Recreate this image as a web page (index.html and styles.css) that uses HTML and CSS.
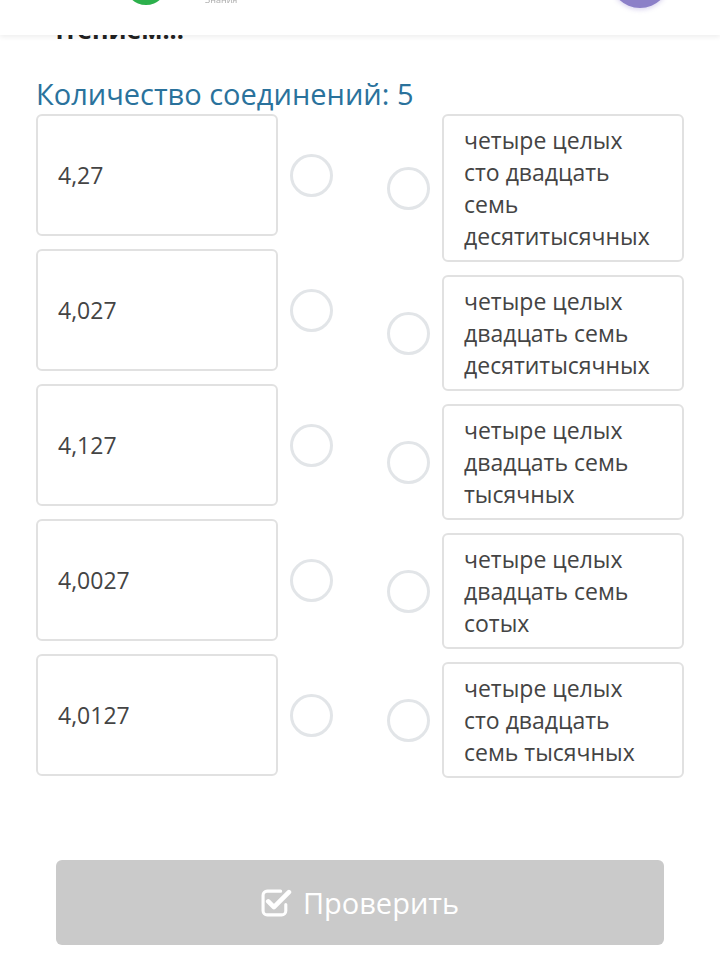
FILE: index.html
```html
<!DOCTYPE html>
<html lang="ru">
<head>
<meta charset="utf-8">
<link rel="stylesheet" href="styles.css">
</head>
<body>
<header class="topbar">
  <span class="logo-dot"></span>
  <span class="logo-text">Знания</span>
  <span class="avatar"></span>
</header>
<main class="page">
  <h1 class="title">чтением...</h1>
  <h2 class="count">Количество соединений: 5</h2>
  <div class="match">
    <div class="col col-left">
      <div class="row"><div class="box box-left">4,27</div><span class="radio"></span></div>
      <div class="row"><div class="box box-left">4,027</div><span class="radio"></span></div>
      <div class="row"><div class="box box-left">4,127</div><span class="radio"></span></div>
      <div class="row"><div class="box box-left">4,0027</div><span class="radio"></span></div>
      <div class="row"><div class="box box-left">4,0127</div><span class="radio"></span></div>
    </div>
    <div class="col col-right">
      <div class="row"><span class="radio"></span><div class="box box-right">четыре целых сто двадцать семь десятитысячных</div></div>
      <div class="row"><span class="radio"></span><div class="box box-right">четыре целых двадцать семь десятитысячных</div></div>
      <div class="row"><span class="radio"></span><div class="box box-right">четыре целых двадцать семь тысячных</div></div>
      <div class="row"><span class="radio"></span><div class="box box-right">четыре целых двадцать семь сотых</div></div>
      <div class="row"><span class="radio"></span><div class="box box-right">четыре целых сто двадцать семь тысячных</div></div>
    </div>
  </div>
  <button class="check-btn" type="button">
    <svg class="check-icon" viewBox="0 0 30 28" width="31" height="29" aria-hidden="true">
      <path d="M19 3 H6 A4 4 0 0 0 2 7 V22 A4 4 0 0 0 6 26 H20 A4 4 0 0 0 24 22 V16" fill="none" stroke="#fff" stroke-width="3" stroke-linecap="round"/>
      <path d="M7 13 L12.5 18.5 L27 4" fill="none" stroke="#fff" stroke-width="4.5" stroke-linecap="round" stroke-linejoin="round"/>
    </svg>
    <span>Проверить</span>
  </button>
</main>
</body>
</html>
```
FILE: styles.css
```css
html, body {
  margin: 0;
  padding: 0;
  background: #fff;
}
body {
  font-family: "Open Sans", "Noto Sans", sans-serif;
  color: #444;
}
.topbar {
  position: fixed;
  top: 0;
  left: 0;
  right: 0;
  height: 35px;
  background: #fff;
  box-shadow: 0 2px 5px rgba(0, 0, 0, 0.07);
  display: flex;
  align-items: flex-start;
  overflow: hidden;
  z-index: 5;
}
.logo-dot {
  width: 42px;
  height: 42px;
  margin-top: -37px;
  margin-left: 125px;
  border-radius: 50%;
  background: #2cb04c;
}
.logo-text {
  font-size: 9px;
  line-height: 10px;
  color: #aaa;
  margin-left: 38px;
  margin-top: -5px;
}
.avatar {
  width: 60px;
  height: 60px;
  margin-top: -52px;
  margin-left: auto;
  margin-right: 50px;
  border-radius: 50%;
  background: #8c80c8;
  box-shadow: 0 2px 4px rgba(120, 100, 200, 0.25);
}
.page {
  padding: 0 36px;
}
.title {
  margin: 12px 0 0 11px;
  font-size: 25px;
  line-height: 34px;
  font-weight: 700;
  color: #222;
}
.count {
  margin: 28px 0 0 0;
  font-size: 29px;
  line-height: 40px;
  font-weight: 400;
  color: #2a729c;
}
.match {
  display: flex;
  gap: 54px;
}
.col {
  display: flex;
  flex-direction: column;
  gap: 13px;
  width: 297px;
}
.row {
  display: flex;
  align-items: center;
  gap: 12px;
}
.box {
  box-sizing: border-box;
  width: 242px;
  border: 2px solid #e1e1e1;
  border-radius: 6px;
  background: #fff;
  color: #444;
}
.box-left {
  height: 122px;
  display: flex;
  align-items: center;
  padding: 0 20px;
  font-size: 23px;
}
.box-right {
  padding: 8px 22px 8px 20px;
  font-size: 23px;
  line-height: 32px;
}
.radio {
  box-sizing: border-box;
  flex: none;
  width: 43px;
  height: 43px;
  border: 3px solid #e2e5e8;
  border-radius: 50%;
}
.check-btn {
  margin: 82px 20px 0;
  width: calc(100% - 40px);
  height: 85px;
  border: none;
  border-radius: 6px;
  background: #cacaca;
  color: #fff;
  display: flex;
  align-items: center;
  justify-content: center;
  gap: 11px;
  font-family: "Open Sans", "Noto Sans", sans-serif;
  font-size: 29px;
  font-weight: 400;
  padding: 0;
}
.check-icon {
  flex: none;
}
```
